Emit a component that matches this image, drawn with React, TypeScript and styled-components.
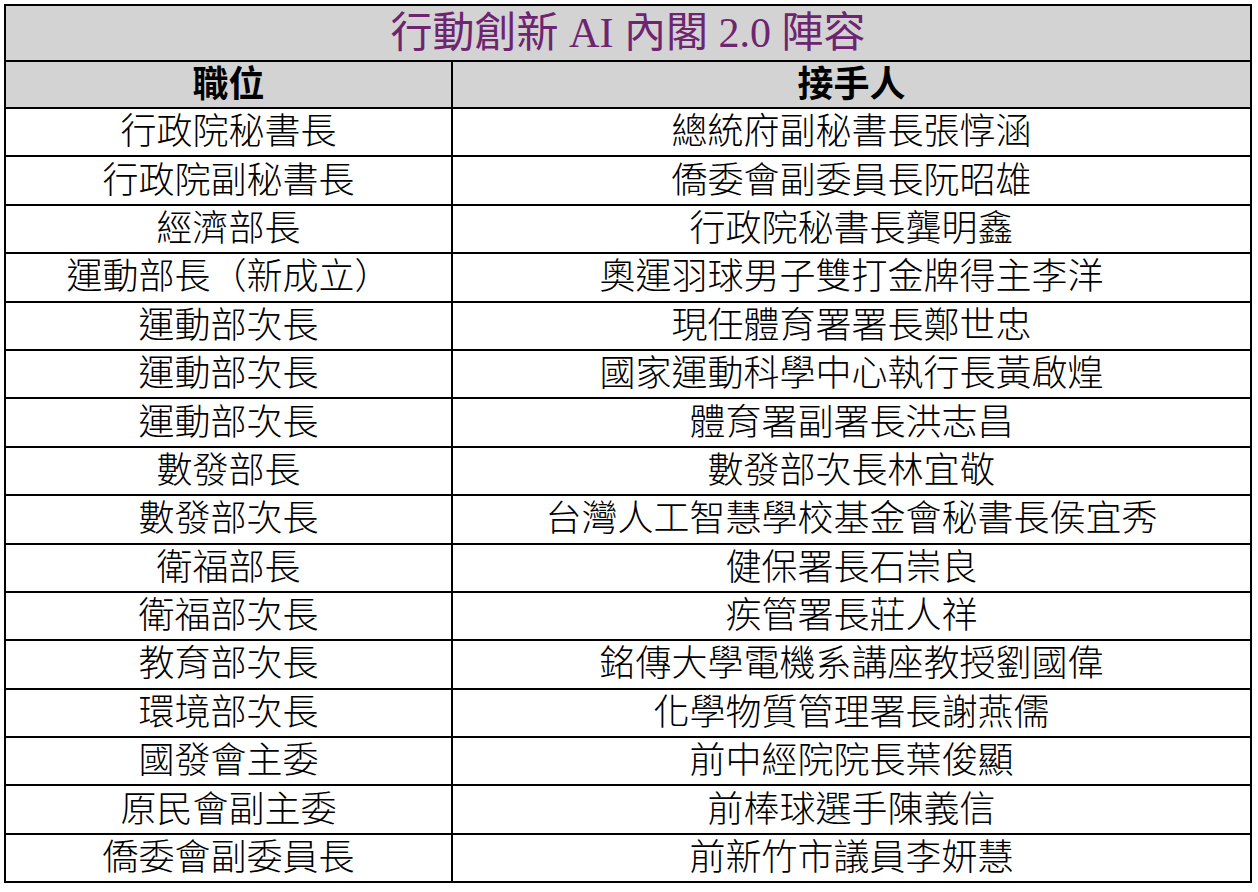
import React from 'react';
import styled, { createGlobalStyle } from 'styled-components';

const GlobalStyle = createGlobalStyle`
  html, body {
    margin: 0;
    padding: 0;
    background: #ffffff;
  }
`;

const Page = styled.div`
  padding: 4px 0 0 4px;
`;

const Table = styled.table`
  width: 1246px;
  border-collapse: collapse;
  table-layout: fixed;
  font-family: "Liberation Serif", "Noto Sans CJK TC", serif;
  color: #000;
`;

const Cell = styled.td<{ $head?: boolean }>`
  border: 2px solid #000;
  padding: 0;
  text-align: center;
  vertical-align: middle;
  font-size: 36px;
  line-height: 1;
  font-weight: ${(p) => (p.$head ? 700 : 300)};
  background: ${(p) => (p.$head ? '#d3d3d3' : '#ffffff')};
  white-space: nowrap;
`;

const TitleCell = styled.td`
  border: 2px solid #000;
  padding: 0;
  height: 54px;
  text-align: center;
  vertical-align: middle;
  background: #d3d3d3;
  color: #6f2470;
  font-size: 42px;
  line-height: 1;
  font-weight: 400;
  white-space: nowrap;
`;

const HeadRow = styled.tr`
  height: 47px;
`;

const Row = styled.tr`
  height: 48.4px;
`;

const rows: [string, string][] = [
  ['行政院秘書長', '總統府副秘書長張惇涵'],
  ['行政院副秘書長', '僑委會副委員長阮昭雄'],
  ['經濟部長', '行政院秘書長龔明鑫'],
  ['運動部長（新成立）', '奧運羽球男子雙打金牌得主李洋'],
  ['運動部次長', '現任體育署署長鄭世忠'],
  ['運動部次長', '國家運動科學中心執行長黃啟煌'],
  ['運動部次長', '體育署副署長洪志昌'],
  ['數發部長', '數發部次長林宜敬'],
  ['數發部次長', '台灣人工智慧學校基金會秘書長侯宜秀'],
  ['衛福部長', '健保署長石崇良'],
  ['衛福部次長', '疾管署長莊人祥'],
  ['教育部次長', '銘傳大學電機系講座教授劉國偉'],
  ['環境部次長', '化學物質管理署長謝燕儒'],
  ['國發會主委', '前中經院院長葉俊顯'],
  ['原民會副主委', '前棒球選手陳義信'],
  ['僑委會副委員長', '前新竹市議員李妍慧'],
];

export default function App() {
  return (
    <Page>
      <GlobalStyle />
      <Table>
        <colgroup>
          <col style={{ width: 447 }} />
          <col style={{ width: 799 }} />
        </colgroup>
        <tbody>
          <tr>
            <TitleCell colSpan={2}>行動創新 AI 內閣 2.0 陣容</TitleCell>
          </tr>
          <HeadRow>
            <Cell $head>職位</Cell>
            <Cell $head>接手人</Cell>
          </HeadRow>
          {rows.map(([role, person], i) => (
            <Row key={i}>
              <Cell>{role}</Cell>
              <Cell>{person}</Cell>
            </Row>
          ))}
        </tbody>
      </Table>
    </Page>
  );
}
